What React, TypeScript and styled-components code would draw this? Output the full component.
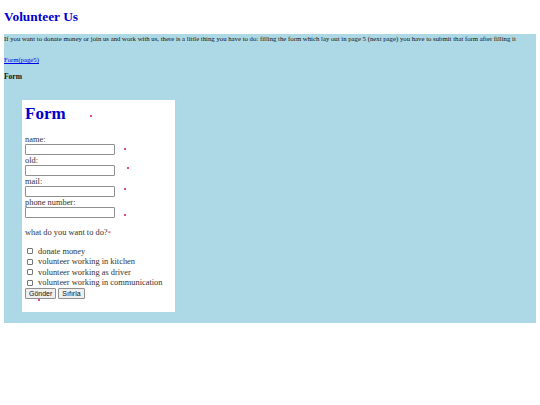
import React from 'react'
import styled, { createGlobalStyle } from 'styled-components'

const GlobalStyle = createGlobalStyle`
  body {
    margin: 4px;
    font-family: "Liberation Serif", "Times New Roman", serif;
    color: #000;
    background: #fff;
  }
`

const PageTitle = styled.h1`
  margin: 0;
  padding-top: 5px;
  height: 30px;
  box-sizing: border-box;
  font-size: 13.4px;
  line-height: 15px;
  font-weight: bold;
  color: #0000cd;
`

const Panel = styled.section`
  background-color: #add8e6;
  height: 289px;
  box-sizing: border-box;
`

const Intro = styled.p`
  margin: 0;
  padding-top: 1px;
  font-size: 6.75px;
  line-height: 7px;
  color: #111;
`

const PageLink = styled.a`
  display: block;
  margin-top: 14px;
  font-size: 6.7px;
  line-height: 7px;
  color: #0000ee;
`

const SectionLabel = styled.h4`
  margin: 10px 0 0;
  font-size: 7.5px;
  line-height: 7px;
  font-weight: bold;
  color: #111;
`

const FormBox = styled.form`
  position: relative;
  margin: 20px 0 0 18px;
  width: 153px;
  height: 212px;
  box-sizing: border-box;
  padding: 4px 3px 0;
  background: #fff;
  color: #333;
  font-size: 8.4px;
`

const FormTitle = styled.h1`
  margin: 0;
  font-size: 17px;
  line-height: 19px;
  font-weight: bold;
  color: #0000cd;
`

const Fields = styled.div`
  margin-top: 12px;
  display: flex;
  flex-direction: column;
`

const FieldLabel = styled.label`
  display: block;
  line-height: 10px;
  height: 9px;
`

const TextInput = styled.input`
  display: block;
  width: 90px;
  height: 11px;
  box-sizing: border-box;
  margin: 0 0 1px;
  padding: 0 2px;
  border: 1px solid #8f8f8f;
  border-radius: 1px;
  font-size: 6px;
`

const Question = styled.p`
  margin: 9px 0 0;
  line-height: 10px;
`

const Star = styled.span`
  color: #d2143a;
  font-size: 7px;
`

const Choices = styled.div`
  margin-top: 8px;
  display: flex;
  flex-direction: column;
`

const Choice = styled.label`
  display: flex;
  align-items: center;
  gap: 5px;
  height: 10.5px;
  padding-left: 2px;
`

const Box = styled.input`
  appearance: none;
  margin: 0;
  width: 6px;
  height: 6px;
  box-sizing: border-box;
  border: 1px solid #767676;
  border-radius: 1px;
  background: #fff;
`

const Buttons = styled.div`
  display: flex;
  gap: 2px;
`

const Button = styled.button`
  height: 11px;
  padding: 0 3px;
  font-family: "Liberation Sans", Arial, sans-serif;
  font-size: 7px;
  line-height: 9px;
  color: #111;
  background: #efefef;
  border: 1px solid #8f8f8f;
  border-radius: 1px;
`

const Dot = styled.span<{ left: number, top: number }>`
  position: absolute;
  left: ${({ left }) => left}px;
  top: ${({ top }) => top}px;
  width: 2px;
  height: 2px;
  border-radius: 50%;
  background: #d2143a;
`

const fields = ['name:', 'old:', 'mail:', 'phone number:']

const choices = [
  'donate money',
  'volunteer working in kitchen',
  'volunteer working as driver',
  'volunteer working in communication'
]

const dots = [
  { left: 68, top: 15 },
  { left: 102, top: 48 },
  { left: 105, top: 67 },
  { left: 102, top: 88 },
  { left: 102, top: 114 },
  { left: 16, top: 199 }
]

export default function App (): React.ReactElement {
  return (
    <>
      <GlobalStyle />
      <PageTitle>Volunteer Us</PageTitle>
      <Panel>
        <Intro>
          If you want to donate money or join us and work with us, there is a little thing you have to do: filling the form which lay out in page 5 (next page) you have to submit that form after filling it
        </Intro>
        <PageLink href='#form'>Form(page5)</PageLink>
        <SectionLabel>Form</SectionLabel>
        <FormBox id='form' onSubmit={(e) => e.preventDefault()}>
          <FormTitle>Form</FormTitle>
          <Fields>
            {fields.map((f) => (
              <React.Fragment key={f}>
                <FieldLabel>{f}</FieldLabel>
                <TextInput type='text' />
              </React.Fragment>
            ))}
          </Fields>
          <Question>what do you want to do?<Star>*</Star></Question>
          <Choices>
            {choices.map((c) => (
              <Choice key={c}><Box type='checkbox' />{c}</Choice>
            ))}
          </Choices>
          <Buttons>
            <Button type='submit'>Gönder</Button>
            <Button type='reset'>Sıfırla</Button>
          </Buttons>
          {dots.map((d, i) => <Dot key={i} left={d.left} top={d.top} />)}
        </FormBox>
      </Panel>
    </>
  )
}
